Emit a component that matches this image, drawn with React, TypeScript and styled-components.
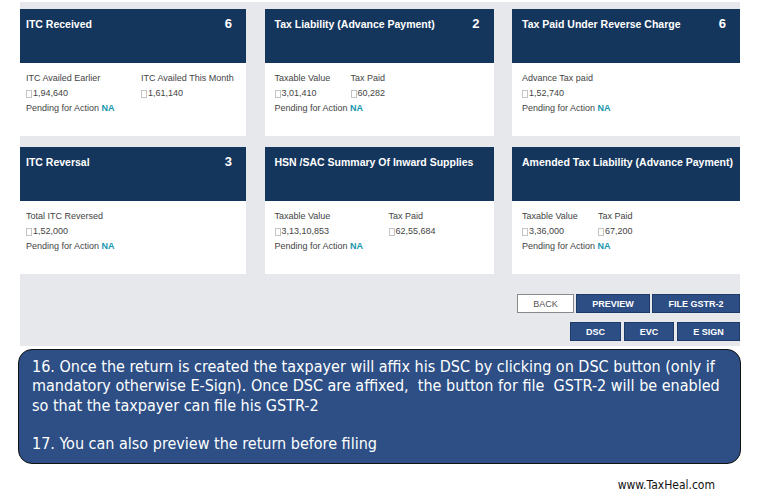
import styled, { createGlobalStyle } from 'styled-components';

const GlobalStyle = createGlobalStyle`
  html, body {
    margin: 0;
    padding: 0;
    background: #ffffff;
  }
`;

type Field = { label: string; value: string; width?: number };

type Summary = {
  title: string;
  count?: string;
  fields: Field[];
  pending: boolean;
};

const SUMMARIES: Summary[] = [
  {
    title: 'ITC Received',
    count: '6',
    fields: [
      { label: 'ITC Availed Earlier', value: '1,94,640', width: 115 },
      { label: 'ITC Availed This Month', value: '1,61,140' },
    ],
    pending: true,
  },
  {
    title: 'Tax Liability (Advance Payment)',
    count: '2',
    fields: [
      { label: 'Taxable Value', value: '3,01,410', width: 76 },
      { label: 'Tax Paid', value: '60,282' },
    ],
    pending: true,
  },
  {
    title: 'Tax Paid Under Reverse Charge',
    count: '6',
    fields: [{ label: 'Advance Tax paid', value: '1,52,740' }],
    pending: true,
  },
  {
    title: 'ITC Reversal',
    count: '3',
    fields: [{ label: 'Total ITC Reversed', value: '1,52,000' }],
    pending: true,
  },
  {
    title: 'HSN /SAC Summary Of Inward Supplies',
    fields: [
      { label: 'Taxable Value', value: '3,13,10,853', width: 114 },
      { label: 'Tax Paid', value: '62,55,684' },
    ],
    pending: true,
  },
  {
    title: 'Amended Tax Liability (Advance Payment)',
    fields: [
      { label: 'Taxable Value', value: '3,36,000', width: 76 },
      { label: 'Tax Paid', value: '67,200' },
    ],
    pending: true,
  },
];

const SummaryCard = ({ item }: { item: Summary }) => (
  <Card>
    <CardHeader>
      <CardTitle>{item.title}</CardTitle>
      {item.count && <CardCount>{item.count}</CardCount>}
    </CardHeader>
    <CardBody>
      <Fields>
        {item.fields.map((f) => (
          <FieldCol key={f.label} $width={f.width}>
            <Label>{f.label}</Label>
            <Value>
              <Tofu />
              {f.value}
            </Value>
          </FieldCol>
        ))}
      </Fields>
      {item.pending && (
        <Pending>
          Pending for Action <strong>NA</strong>
        </Pending>
      )}
    </CardBody>
  </Card>
);

export default function App() {
  return (
    <>
      <GlobalStyle />
      <Page>
        <Dashboard>
          <CardGrid>
            {SUMMARIES.map((s) => (
              <SummaryCard key={s.title} item={s} />
            ))}
          </CardGrid>
          <Actions>
            <ButtonRow>
              <ActionButton $variant="outline" $width={57}>BACK</ActionButton>
              <ActionButton $width={74}>PREVIEW</ActionButton>
              <ActionButton $width={88}>FILE GSTR-2</ActionButton>
            </ButtonRow>
            <ButtonRow $gap={3}>
              <ActionButton $width={51}>DSC</ActionButton>
              <ActionButton $width={50}>EVC</ActionButton>
              <ActionButton $width={63}>E SIGN</ActionButton>
            </ButtonRow>
          </Actions>
        </Dashboard>

        <Callout>
          <p>
            16. Once the return is created the taxpayer will affix his DSC by clicking on DSC button (only if
            <br />
            mandatory otherwise E-Sign). Once DSC are affixed,&nbsp; the button for file&nbsp; GSTR-2 will be enabled
            <br />
            so that the taxpayer can file his GSTR-2
          </p>
          <p>17. You can also preview the return before filing</p>
        </Callout>

        <Footer>www.TaxHeal.com</Footer>
      </Page>
    </>
  );
}

const Page = styled.div`
  width: 762px;
  height: 501px;
  padding: 2px 22px 0 20px;
  box-sizing: border-box;
  overflow: hidden;
  font-family: 'Liberation Sans', Arial, sans-serif;
`;

const Dashboard = styled.section`
  background: #e6e8eb;
  padding: 7px 0 5px;
  width: 720px;
`;

const CardGrid = styled.div`
  display: grid;
  grid-template-columns: 226px 229px 228px;
  column-gap: 18px;
  row-gap: 11px;
  justify-content: space-between;

  /* the first column is cropped at the left edge of the screenshot */
  & > div:nth-child(3n + 1) > * {
    padding-left: 6px;
  }
`;

const Card = styled.div`
  display: flex;
  flex-direction: column;
  background: #ffffff;
  overflow: hidden;
`;

const CardHeader = styled.div`
  height: 54px;
  background: #15365c;
  color: #ffffff;
  display: flex;
  justify-content: space-between;
  align-items: flex-start;
  padding: 8px 14px 0 10px;
  box-sizing: border-box;
`;

const CardTitle = styled.h3`
  margin: 0;
  font-size: 10.5px;
  font-weight: bold;
  line-height: 14px;
  white-space: nowrap;
`;

const CardCount = styled.span`
  font-size: 13px;
  font-weight: bold;
  line-height: 14px;
`;

const CardBody = styled.div`
  height: 73px;
  padding: 8px 10px 0;
  box-sizing: border-box;
  font-size: 9px;
  line-height: 15px;
  color: #3a3a3a;
`;

const Fields = styled.div`
  display: flex;
`;

const FieldCol = styled.div<{ $width?: number }>`
  display: flex;
  flex-direction: column;
  width: ${(p) => (p.$width ? `${p.$width}px` : 'auto')};
  white-space: nowrap;
`;

const Label = styled.span`
  color: #444444;
`;

const Value = styled.span`
  display: flex;
  align-items: center;
  color: #444444;
`;

const Tofu = styled.span`
  display: inline-block;
  width: 4px;
  height: 6px;
  border: 1px solid #c4c4c4;
  margin-right: 1px;
`;

const Pending = styled.div`
  color: #444444;

  strong {
    color: #1796ad;
    font-weight: bold;
  }
`;

const Actions = styled.div`
  display: flex;
  flex-direction: column;
  align-items: flex-end;
  gap: 9px;
  margin-top: 20px;
`;

const ButtonRow = styled.div<{ $gap?: number }>`
  display: flex;
  gap: ${(p) => p.$gap ?? 2}px;
`;

const ActionButton = styled.button<{ $variant?: 'outline'; $width: number }>`
  width: ${(p) => p.$width}px;
  height: 19px;
  padding: 0;
  box-sizing: border-box;
  font-family: 'Liberation Sans', Arial, sans-serif;
  font-size: 9px;
  font-weight: ${(p) => (p.$variant === 'outline' ? 'normal' : 'bold')};
  color: ${(p) => (p.$variant === 'outline' ? '#555555' : '#ffffff')};
  background: ${(p) => (p.$variant === 'outline' ? '#ffffff' : '#2c4e85')};
  border: 1px solid ${(p) => (p.$variant === 'outline' ? '#8a8a8a' : '#1e3a66')};
  border-radius: 0;
`;

const Callout = styled.div`
  margin: 3px -1px 0 -2px;
  height: 115px;
  box-sizing: border-box;
  background: #2d4f86;
  border: 1px solid #111111;
  border-radius: 14px;
  padding: 7px 10px 0 13px;
  color: #ffffff;
  font-family: 'DejaVu Sans Condensed', 'DejaVu Sans', sans-serif;
  font-size: 16px;
  line-height: 19.3px;
  white-space: nowrap;

  p {
    margin: 0 0 19.3px;
  }
`;

const Footer = styled.div`
  margin-top: 14px;
  padding-right: 25px;
  text-align: right;
  font-family: 'DejaVu Sans Condensed', 'DejaVu Sans', sans-serif;
  font-size: 12px;
  color: #111111;
`;
